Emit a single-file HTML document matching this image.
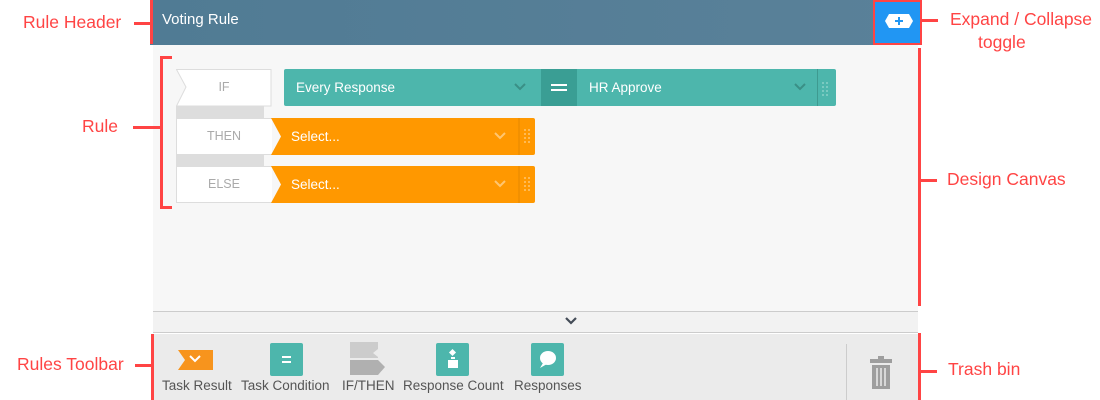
<!DOCTYPE html>
<html><head><meta charset="utf-8"><style>
*{margin:0;padding:0;box-sizing:border-box}
body{width:1100px;height:400px;background:#fff;position:relative;overflow:hidden;font-family:"Liberation Sans",sans-serif}
.a{position:absolute}
.lbl{position:absolute;color:#ff4444;font-size:17.5px;white-space:nowrap}
.red{position:absolute;background:#ff4444}
.t{position:absolute;font-size:13.5px;color:#fff;line-height:37px}
.g{position:absolute;font-size:12.5px;color:#aaa;text-align:center;line-height:37px}
.tb{position:absolute;font-size:13.5px;color:#555;white-space:nowrap;top:378px}
</style></head><body>
<div class="a" style="left:150px;top:0;width:772px;height:45px;background:linear-gradient(90deg,#507b94,#5a8199)"></div>
<div class="a" style="left:162px;top:11px;color:#fff;font-size:15px">Voting Rule</div>
<div class="a" style="left:873px;top:0;width:49px;height:45px;background:#2196f3;border:2px solid #ff4444"></div>
<svg class="a" style="left:885px;top:14px" width="28" height="14"><polygon points="4,0 24,0 28,7 24,14 4,14 0,7" fill="#fff"/><path d="M14 3v8M10 7h8" stroke="#2196f3" stroke-width="2"/></svg>
<div class="a" style="left:153px;top:45px;width:765px;height:266px;background:#f7f7f7"></div>
<div class="a" style="left:153px;top:311px;width:765px;height:22px;background:#f2f2f2;border-top:1px solid #ccc;border-bottom:1px solid #ccc"></div>
<svg class="a" style="left:564px;top:316px" width="14" height="10"><path d="M2 2l5 5 5-5" stroke="#444c57" stroke-width="2.2" fill="none"/></svg>
<div class="a" style="left:153px;top:334px;width:765px;height:66px;background:#ebebeb"></div>
<div class="a" style="left:846px;top:344px;width:1px;height:56px;background:#ccc"></div>
<div class="a" style="left:176px;top:106px;width:88px;height:12px;background:#ddd"></div>
<div class="a" style="left:176px;top:155px;width:88px;height:11px;background:#ddd"></div>
<svg class="a" style="left:176px;top:69px" width="96" height="38"><polygon points="0.5,0.5 95,0.5 95,37 0.5,37 10,18" fill="#fff" stroke="#ddd"/></svg>
<div class="g" style="left:186px;top:69px;width:76px">IF</div>
<div class="a" style="left:176px;top:118px;width:96px;height:37px;background:#fff;border:1px solid #ddd;border-right:none"></div>
<div class="g" style="left:176px;top:118px;width:96px">THEN</div>
<div class="a" style="left:176px;top:166px;width:96px;height:37px;background:#fff;border:1px solid #ddd;border-right:none"></div>
<div class="g" style="left:176px;top:166px;width:96px">ELSE</div>
<div class="a" style="left:284px;top:69px;width:552px;height:37px;background:#4db6ac;border-radius:2px"></div>
<div class="a" style="left:541px;top:69px;width:36px;height:37px;background:#3a9e94"></div>
<div class="a" style="left:551px;top:84px;width:16px;height:2px;background:#fff"></div>
<div class="a" style="left:551px;top:89px;width:16px;height:2px;background:#fff"></div>
<div class="t" style="left:296px;top:69px">Every Response</div>
<div class="t" style="left:589px;top:69px">HR Approve</div>
<div class="a" style="left:817px;top:69px;width:1px;height:37px;background:#3e9a90"></div>
<svg class="a" style="left:271px;top:118px" width="265" height="86">
<path d="M0 0H262a2 2 0 0 1 2 2V35a2 2 0 0 1-2 2H0L10 18.5z" fill="#ff9800"/>
<path d="M0 48H262a2 2 0 0 1 2 2V83a2 2 0 0 1-2 2H0L10 66.5z" fill="#ff9800"/>
<path d="M248 0v37M248 48v37" stroke="#e68800"/>
<g fill="#ffc670"><circle cx="254" cy="12" r="1"/><circle cx="258" cy="12" r="1"/><circle cx="254" cy="16" r="1"/><circle cx="258" cy="16" r="1"/><circle cx="254" cy="20" r="1"/><circle cx="258" cy="20" r="1"/><circle cx="254" cy="24" r="1"/><circle cx="258" cy="24" r="1"/>
<circle cx="254" cy="60" r="1"/><circle cx="258" cy="60" r="1"/><circle cx="254" cy="64" r="1"/><circle cx="258" cy="64" r="1"/><circle cx="254" cy="68" r="1"/><circle cx="258" cy="68" r="1"/><circle cx="254" cy="72" r="1"/><circle cx="258" cy="72" r="1"/></g>
<path d="M224 15l5 5 5-5M224 63l5 5 5-5" stroke="#ffc670" stroke-width="2" fill="none"/>
</svg>
<svg class="a" style="left:510px;top:80px" width="320" height="20"><path d="M5 4l5 5 5-5M285 4l5 5 5-5" stroke="#3a8f86" stroke-width="2" fill="none"/><g fill="#88d0c8"><circle cx="313" cy="3" r="1"/><circle cx="317" cy="3" r="1"/><circle cx="313" cy="7" r="1"/><circle cx="317" cy="7" r="1"/><circle cx="313" cy="11" r="1"/><circle cx="317" cy="11" r="1"/><circle cx="313" cy="15" r="1"/><circle cx="317" cy="15" r="1"/></g></svg>
<div class="t" style="left:291px;top:118px">Select...</div>
<div class="t" style="left:291px;top:166px">Select...</div>
<svg class="a" style="left:178px;top:350px" width="35" height="20"><path d="M0 0H35V20H0L7 10z" fill="#f7941d"/><path d="M12 6l5 5 5-5" stroke="#fff" stroke-width="2" fill="none"/></svg>
<div class="a" style="left:270px;top:343px;width:33px;height:33px;background:#4db6ac;border-radius:2px"></div>
<div class="a" style="left:282px;top:356px;width:9px;height:2px;background:#fff"></div>
<div class="a" style="left:282px;top:361px;width:9px;height:2px;background:#fff"></div>
<svg class="a" style="left:350px;top:342px" width="36" height="34"><path d="M0 0H28V7L23 11L28 15V16H0z" fill="#ccc"/><path d="M0 18H28L35 25L28 33H0z" fill="#b0b0b0"/></svg>
<div class="a" style="left:436px;top:343px;width:33px;height:33px;background:#4db6ac;border-radius:2px"></div>
<svg class="a" style="left:436px;top:343px" width="33" height="33"><rect x="12" y="17" width="10" height="8" fill="#fff"/><rect x="14" y="7" width="5" height="5" fill="#fff" transform="rotate(45 16.5 9.5)"/><rect x="15" y="14" width="4" height="2" fill="#fff"/></svg>
<div class="a" style="left:531px;top:343px;width:33px;height:33px;background:#4db6ac;border-radius:2px"></div>
<svg class="a" style="left:531px;top:343px" width="33" height="33"><ellipse cx="17" cy="15" rx="8" ry="7" fill="#fff"/><path d="M12 20l-3 5 7-4z" fill="#fff"/></svg>
<div class="tb" style="left:162px">Task Result</div>
<div class="tb" style="left:241px">Task Condition</div>
<div class="tb" style="left:342px">IF/THEN</div>
<div class="tb" style="left:403px">Response Count</div>
<div class="tb" style="left:514px">Responses</div>
<svg class="a" style="left:868px;top:355px" width="26" height="35"><rect x="10" y="1" width="6" height="3" fill="#9e9e9e"/><rect x="2" y="4" width="22" height="4" fill="#9e9e9e"/><path d="M4 10H22V34H4z" fill="#9e9e9e"/><path d="M9 13V31M13 13V31M17 13V31" stroke="#ebebeb" stroke-width="1.5"/></svg>
<div class="red" style="left:150px;top:0;width:3px;height:44px"></div>
<div class="red" style="left:134px;top:22px;width:16px;height:3px"></div>
<div class="lbl" style="left:23px;top:12px">Rule Header</div>
<div class="red" style="left:922px;top:19px;width:16px;height:3px"></div>
<div class="lbl" style="left:950px;top:9px">Expand / Collapse</div>
<div class="lbl" style="left:978px;top:32px">toggle</div>
<div class="red" style="left:160px;top:56px;width:3px;height:153px"></div>
<div class="red" style="left:160px;top:56px;width:12px;height:3px"></div>
<div class="red" style="left:160px;top:206px;width:12px;height:3px"></div>
<div class="red" style="left:133px;top:126px;width:27px;height:3px"></div>
<div class="lbl" style="left:82px;top:116px">Rule</div>
<div class="red" style="left:918px;top:48px;width:3px;height:258px"></div>
<div class="red" style="left:921px;top:179px;width:16px;height:3px"></div>
<div class="lbl" style="left:947px;top:169px">Design Canvas</div>
<div class="red" style="left:918px;top:333px;width:3px;height:67px"></div>
<div class="red" style="left:921px;top:370px;width:16px;height:3px"></div>
<div class="lbl" style="left:948px;top:359px">Trash bin</div>
<div class="red" style="left:151px;top:334px;width:3px;height:66px"></div>
<div class="red" style="left:135px;top:364px;width:16px;height:3px"></div>
<div class="lbl" style="left:17px;top:354px">Rules Toolbar</div>
</body></html>
